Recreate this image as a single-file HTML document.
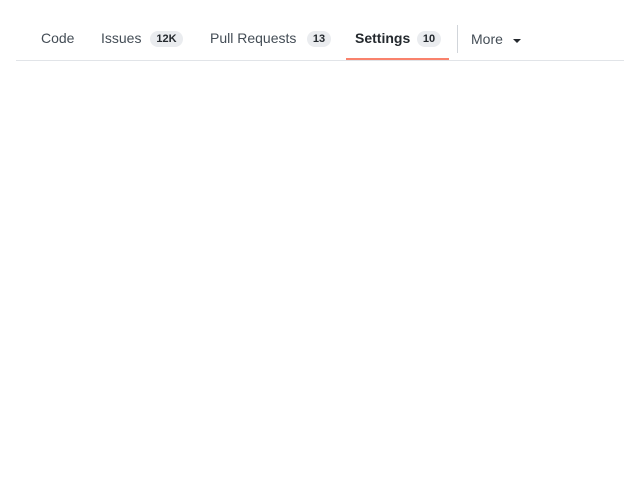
<!DOCTYPE html>
<html><head><meta charset="utf-8"><style>
body{margin:0;width:640px;height:480px;background:#fff;font-family:"Liberation Sans",sans-serif;position:relative;overflow:hidden}
.t{position:absolute;top:30px;font-size:14px;color:#444d56;line-height:16px;white-space:nowrap}
.b{position:absolute;top:31px;height:16px;line-height:16px;font-size:11px;font-weight:bold;color:#24292e;background:#eaecef;border-radius:8px;text-align:center}
</style></head><body>
<div class="t" style="left:41px">Code</div>
<div class="t" style="left:101px">Issues</div>
<div class="b" style="left:150px;width:33px">12K</div>
<div class="t" style="left:210px">Pull Requests</div>
<div class="b" style="left:307px;width:24px">13</div>
<div class="t" style="left:355px;font-weight:bold;color:#24292e">Settings</div>
<div class="b" style="left:417px;width:24px">10</div>
<div style="position:absolute;left:346px;top:58px;width:103px;height:2px;background:#f9826c"></div>
<div style="position:absolute;left:457px;top:25px;width:1px;height:28px;background:#d1d5da"></div>
<div class="t" style="left:471px;top:31px">More</div>
<div style="position:absolute;left:513px;top:39px;width:0;height:0;border-left:4px solid transparent;border-right:4px solid transparent;border-top:4px solid #24292e"></div>
<div style="position:absolute;left:16px;top:60px;width:608px;height:1px;background:#e1e4e8"></div>
</body></html>
